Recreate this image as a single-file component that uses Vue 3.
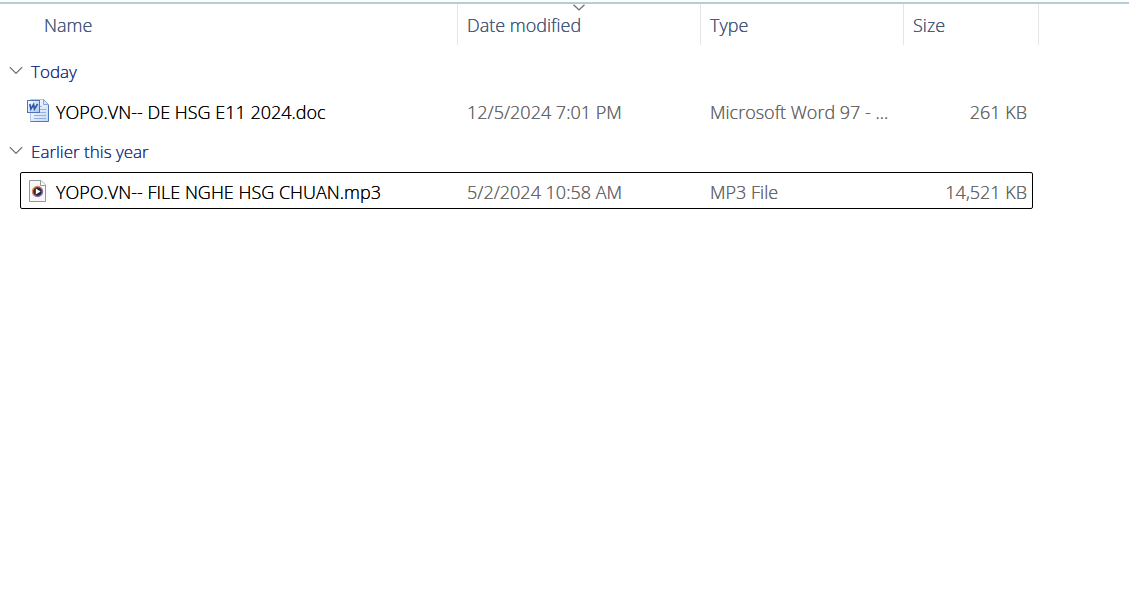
<script setup>
const columns = [
  { key: 'name', label: 'Name' },
  { key: 'date', label: 'Date modified', sorted: true },
  { key: 'type', label: 'Type' },
  { key: 'size', label: 'Size' },
]

const groups = [
  {
    title: 'Today',
    files: [
      {
        name: 'YOPO.VN-- DE HSG E11 2024.doc',
        date: '12/5/2024 7:01 PM',
        type: 'Microsoft Word 97 - ...',
        size: '261 KB',
        icon: 'word',
      },
    ],
  },
  {
    title: 'Earlier this year',
    files: [
      {
        name: 'YOPO.VN-- FILE NGHE HSG CHUAN.mp3',
        date: '5/2/2024 10:58 AM',
        type: 'MP3 File',
        size: '14,521 KB',
        icon: 'audio',
        focused: true,
      },
    ],
  },
]
</script>

<template>
  <main class="explorer">
    <table class="files">
      <thead>
        <tr class="head">
          <th v-for="col in columns" :key="col.key" scope="col">
            <svg v-if="col.sorted" class="sort" viewBox="0 0 12 8" aria-hidden="true">
              <path d="M0.5 0.8 L6 6 L11.5 0.8" />
            </svg>
            <button type="button">{{ col.label }}</button>
          </th>
        </tr>
      </thead>
      <tbody v-for="group in groups" :key="group.title">
        <tr class="group">
          <th scope="rowgroup">
            <button type="button" aria-expanded="true">
              <svg class="chevron" viewBox="0 0 14 9" aria-hidden="true">
                <path d="M0.8 1.2 L7 7.4 L13.2 1.2" />
              </svg>
              {{ group.title }}
            </button>
          </th>
        </tr>
        <tr v-for="file in group.files" :key="file.name" class="row" :class="{ focused: file.focused }">
          <td class="name">
            <svg v-if="file.icon === 'word'" class="icon" viewBox="0 0 24 24" aria-hidden="true">
              <defs>
                <linearGradient id="sheet" x1="0" y1="0" x2="1" y2="1">
                  <stop offset="0" stop-color="#ffffff" />
                  <stop offset="1" stop-color="#c6d9f6" />
                </linearGradient>
                <linearGradient id="badge" x1="0" y1="0" x2="1" y2="1">
                  <stop offset="0" stop-color="#ffffff" />
                  <stop offset="1" stop-color="#a9c3ee" />
                </linearGradient>
              </defs>
              <path d="M4.5 0.5 H17.5 L22.5 5.5 V22.5 H4.5 Z" fill="url(#sheet)" stroke="#b4c6e4" />
              <path d="M4.5 22.5 H22.5 V6" fill="none" stroke="#5277b8" />
              <path d="M17.5 0.5 V5.5 H22.5 Z" fill="#dce8f9" stroke="#88a4d2" />
              <path d="M14 7.5 H16 M14 10.5 H20 M14 13.5 H20 M8 16.5 H20 M8 19.5 H20" stroke="#93b0e0" />
              <rect x="1.5" y="1.5" width="12" height="12" fill="url(#badge)" stroke="#4d74bb" />
              <path d="M3.8 5 L4.9 10 L7.6 5.5 L8.4 10 L11.6 5" fill="none" stroke="#2c58aa" stroke-width="1.6" />
            </svg>
            <svg v-else class="icon" viewBox="0 0 24 24" aria-hidden="true">
              <defs>
                <linearGradient id="ring" x1="0" y1="0" x2="1" y2="1">
                  <stop offset="0.2" stop-color="#f2854a" />
                  <stop offset="0.8" stop-color="#8a62c0" />
                </linearGradient>
              </defs>
              <path d="M3.5 1.5 H15 L19.5 6 V22.5 H3.5 Z" fill="#f8f8f8" stroke="#979797" />
              <path d="M14.5 1.5 V6.5 H19.5" fill="#ffffff" stroke="#979797" />
              <circle cx="11.5" cy="12.5" r="5" fill="#262a33" stroke="url(#ring)" stroke-width="1.4" />
              <path d="M9.8 9.6 L14.6 12.5 L9.8 15.4 Z" fill="#ffffff" />
            </svg>
            <span>{{ file.name }}</span>
          </td>
          <td>{{ file.date }}</td>
          <td>{{ file.type }}</td>
          <td class="size">{{ file.size }}</td>
        </tr>
      </tbody>
    </table>
  </main>
</template>

<style>
body {
  background: #ffffff;
}
</style>

<style scoped>
.explorer {
  border-top: 2px solid #b6cdd9;
  margin-top: 2px;
  font-family: "Segoe UI", "Open Sans", "Noto Sans", sans-serif;
  font-size: 18px;
  font-weight: 300;
  line-height: 24px;
  color: #666666;
  /* Firms up the thin strokes of the light weight. */
  text-shadow: 0 0 0 currentColor;
}

.files,
.files thead,
.files tbody {
  display: block;
}

.files tbody {
  padding-bottom: 3px;
}

.files thead {
  padding-bottom: 7px;
}

th,
td {
  display: block;
  box-sizing: border-box;
  padding: 0;
  font-weight: inherit;
  text-align: left;
  white-space: nowrap;
  text-shadow: 0 0 0 currentColor;
}

button {
  padding: 0;
  border: 0;
  background: none;
  font: inherit;
  color: inherit;
  text-shadow: inherit;
}

.head {
  display: grid;
  grid-template-columns: 1fr 243px 203px 135px;
  padding-right: 90px;
  color: #44587a;
}

.head th {
  position: relative;
  height: 41px;
  padding: 9px 0 0 9px;
  border-right: 1px solid #e5e5e5;
}

.head th:first-child {
  padding-left: 44px;
}

.sort {
  position: absolute;
  top: 0;
  left: 50%;
  width: 12px;
  height: 8px;
  margin-left: -6px;
}

.sort path,
.chevron path {
  fill: none;
  stroke: #6b6b6b;
  stroke-width: 1.2;
}

.group {
  display: block;
  height: 40px;
  padding: 8px 0 0 9px;
  box-sizing: border-box;
  font-size: 17px;
  color: #1e3287;
}

.group button {
  display: flex;
  align-items: center;
  gap: 8px;
}

.chevron {
  width: 14px;
  height: 9px;
  margin-bottom: 4px;
}

.row {
  display: grid;
  grid-template-columns: 1fr 243px 203px 128px;
  align-items: center;
  box-sizing: border-box;
  height: 37px;
  margin: 0 96px 0 20px;
  padding-top: 3px;
  border: 1px solid transparent;
  border-radius: 2px;
}

.row.focused {
  border-color: #000000;
}

.row td {
  padding-left: 9px;
}

.row .name {
  display: flex;
  align-items: center;
  gap: 6px;
  padding-left: 5px;
  color: #000000;
}

.icon {
  flex: none;
  width: 24px;
  height: 24px;
  margin-bottom: 2px;
}

.row .size {
  padding-right: 5px;
  text-align: right;
}
</style>
